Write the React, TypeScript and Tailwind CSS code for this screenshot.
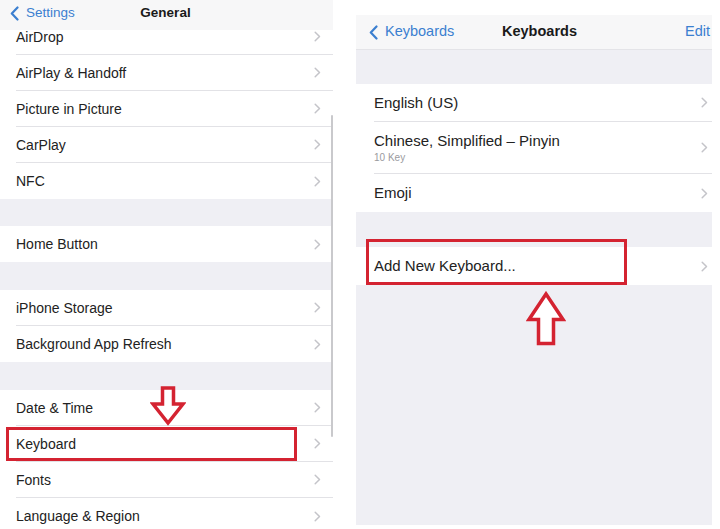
import { ReactNode } from 'react';

type RowProps = {
  label: string;
  sub?: string;
  divider?: boolean;
  height: string;
  padLeft: string;
  padRight: string;
  textSize: string;
};

const Chevron = () => (
  <svg width="7" height="11" viewBox="0 0 7 11" fill="none">
    <path d="M1.2 1.2 5.5 5.5 1.2 9.8" stroke="#c4c4c9" strokeWidth="1.5" strokeLinecap="round" strokeLinejoin="round" />
  </svg>
);

const BackChevron = () => (
  <svg width="9" height="15" viewBox="0 0 9 15" fill="none">
    <path d="M7.5 1.5 1.8 7.5l5.7 6" stroke="#3b7fd0" strokeWidth="2.2" strokeLinecap="round" strokeLinejoin="round" />
  </svg>
);

// settings row, separator is inset from the text
const Row = ({ label, sub, divider, height, padLeft, padRight, textSize }: RowProps) => (
  <div className={`bg-white ${padLeft}`}>
    <div className={`flex items-center justify-between ${height} ${padRight} ${divider ? 'border-b border-[#e2e2e6]' : ''}`}>
      <div className="flex flex-col">
        <span className={`${textSize} leading-[18px] text-[#222]`}>{label}</span>
        {sub && <span className="text-[10px] leading-[12px] text-[#9a9a9e] mt-[2px]">{sub}</span>}
      </div>
      <Chevron />
    </div>
  </div>
);

type GroupProps = {
  items: (string | [string, string])[];
  height: string;
  padLeft: string;
  padRight: string;
  textSize: string;
};

const Group = ({ items, height, padLeft, padRight, textSize }: GroupProps) => (
  <div className="flex flex-col">
    {items.map((item, i) => {
      const label = typeof item === 'string' ? item : item[0];
      const sub = typeof item === 'string' ? undefined : item[1];
      return (
        <Row
          key={label}
          label={label}
          sub={sub}
          divider={i < items.length - 1}
          height={sub ? 'h-[52px]' : height}
          padLeft={padLeft}
          padRight={padRight}
          textSize={textSize}
        />
      );
    })}
  </div>
);

const NavBar = ({ back, title, right, className }: { back: string; title: string; right?: ReactNode; className: string }) => (
  <div className={`grid grid-cols-[1fr_auto_1fr] items-center ${className}`}>
    <div className="flex items-center gap-[7px] text-[#3b7fd0]">
      <BackChevron />
      <span>{back}</span>
    </div>
    <span className="font-bold text-[#1a1a1a]">{title}</span>
    <div className="flex justify-end text-[#3b7fd0]">{right}</div>
  </div>
);

const DownArrow = () => (
  <svg className="absolute left-[150px] top-[386px]" width="36" height="40" viewBox="0 0 36 40" fill="none">
    <path d="M12.5 2h11v16h9.5L18 37 3 18h9.5z" fill="#fff" stroke="#d42331" strokeWidth="3.5" strokeLinejoin="miter" />
  </svg>
);

const UpArrow = () => (
  <svg className="absolute left-[526px] top-[291px]" width="40" height="55" viewBox="0 0 40 55" fill="none">
    <path d="M12.5 52.5h15v-24h9.5L20 3 3 28.5h9.5z" fill="#fff" stroke="#d42331" strokeWidth="3.5" strokeLinejoin="miter" />
  </svg>
);

const App = () => {
  const left = { height: 'h-[36px]', padLeft: 'pl-[16px]', padRight: 'pr-[12px]', textSize: 'text-[14px]' };
  const right = { height: 'h-[38px]', padLeft: 'pl-[18px]', padRight: 'pr-[4px]', textSize: 'text-[15px]' };

  return (
    <div
      className="relative flex w-[720px] h-[529px] overflow-hidden bg-white"
      style={{ fontFamily: '"Liberation Sans", Arial, sans-serif' }}
    >
      {/* LEFT: GENERAL */}
      <section className="relative w-[333px] h-full overflow-hidden bg-[#efeff4]">
        <div className="flex flex-col pt-[19px]">
          <Group items={['AirDrop', 'AirPlay & Handoff', 'Picture in Picture', 'CarPlay', 'NFC']} {...left} />
          <div className="h-[27px]" />
          <Group items={['Home Button']} {...left} />
          <div className="h-[28px]" />
          <Group items={['iPhone Storage', 'Background App Refresh']} {...left} />
          <div className="h-[28px]" />
          <Group items={['Date & Time', 'Keyboard', 'Fonts', 'Language & Region']} {...left} />
        </div>
        <NavBar
          back="Settings"
          title="General"
          className="absolute top-0 left-0 w-full h-[30px] pl-[10px] pr-[12px] pb-[4px] text-[13.5px] bg-[#f7f7f8]/95"
        />
        <div className="absolute right-0 top-[115px] w-[2px] h-[322px] rounded-full bg-[#c9c9cc]" />
      </section>

      {/* RIGHT: KEYBOARDS */}
      <section className="ml-[23px] mt-[15px] w-[356px] h-[510px] flex flex-col bg-[#efeff4]">
        <NavBar
          back="Keyboards"
          title="Keyboards"
          right={<span>Edit</span>}
          className="h-[35px] pl-[13px] pr-[2px] text-[14.5px] bg-[#f7f7f8] border-b border-[#e4e4e8]"
        />
        <div className="h-[34px]" />
        <Group items={['English (US)', ['Chinese, Simplified – Pinyin', '10 Key'], 'Emoji']} {...right} />
        <div className="h-[35px]" />
        <Group items={['Add New Keyboard...']} {...right} />
      </section>

      {/* ANNOTATIONS */}
      <div className="absolute left-[6px] top-[427px] w-[291px] h-[34px] border-[3px] border-[#d42331]" />
      <div className="absolute left-[366px] top-[239px] w-[261px] h-[46px] border-[3px] border-[#d42331]" />
      <DownArrow />
      <UpArrow />
    </div>
  );
};

export default App;
